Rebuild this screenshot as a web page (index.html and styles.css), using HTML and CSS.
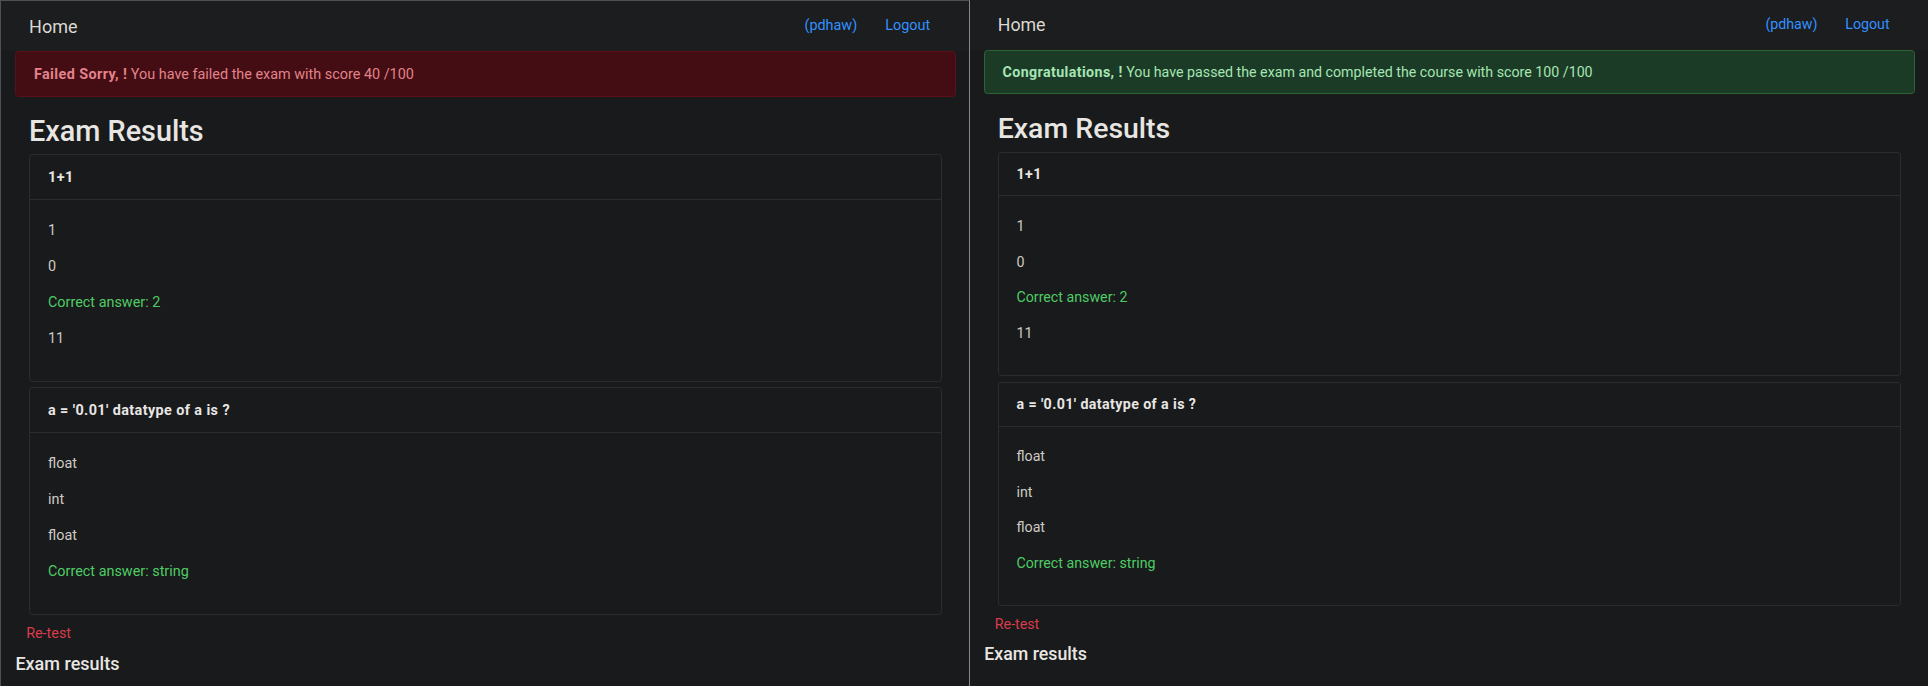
FILE: index.html
```html
<!DOCTYPE html>
<html lang="en">
<head>
<meta charset="utf-8">
<title>Exam Results</title>
<link rel="stylesheet" href="styles.css">
</head>
<body>
<div class="shots">
  <section class="shot shot--fail">
    <nav class="navbar">
      <a class="brand" href="#">Home</a>
      <div class="nav-links">
        <a class="nav-link" href="#">(pdhaw)</a>
        <a class="nav-link" href="#">Logout</a>
      </div>
    </nav>
    <div class="alert alert--danger"><strong>Failed Sorry, !</strong> You have failed the exam with score 40 /100</div>
    <main class="content">
      <h2 class="title">Exam Results</h2>
      <div class="card">
        <div class="card-header">1+1</div>
        <div class="card-body">
          <p>1</p>
          <p>0</p>
          <p class="correct">Correct answer: 2</p>
          <p>11</p>
        </div>
      </div>
      <div class="card">
        <div class="card-header">a = '0.01' datatype of a is ?</div>
        <div class="card-body">
          <p>float</p>
          <p>int</p>
          <p>float</p>
          <p class="correct">Correct answer: string</p>
        </div>
      </div>
      <a class="retest" href="#">Re-test</a>
    </main>
    <h5 class="sub-title">Exam results</h5>
  </section>

  <section class="shot shot--pass">
    <nav class="navbar">
      <a class="brand" href="#">Home</a>
      <div class="nav-links">
        <a class="nav-link" href="#">(pdhaw)</a>
        <a class="nav-link" href="#">Logout</a>
      </div>
    </nav>
    <div class="alert alert--success"><strong>Congratulations, !</strong> You have passed the exam and completed the course with score 100 /100</div>
    <main class="content">
      <h2 class="title">Exam Results</h2>
      <div class="card">
        <div class="card-header">1+1</div>
        <div class="card-body">
          <p>1</p>
          <p>0</p>
          <p class="correct">Correct answer: 2</p>
          <p>11</p>
        </div>
      </div>
      <div class="card">
        <div class="card-header">a = '0.01' datatype of a is ?</div>
        <div class="card-body">
          <p>float</p>
          <p>int</p>
          <p>float</p>
          <p class="correct">Correct answer: string</p>
        </div>
      </div>
      <a class="retest" href="#">Re-test</a>
    </main>
    <h5 class="sub-title">Exam results</h5>
  </section>
</div>
</body>
</html>
```

FILE: styles.css
```css
* { box-sizing: border-box; }

html, body {
  margin: 0;
  padding: 0;
  background: #181a1b;
}

body {
  font-family: "Segoe UI", Roboto, "Noto Sans", "Liberation Sans", sans-serif;
  color: #cfcac4;
  width: 1928px;
  height: 686px;
  overflow: hidden;
}

.shots {
  display: flex;
  align-items: flex-start;
  height: 686px;
}

.shot {
  font-size: 14.4px;
  line-height: 1.5;
  height: 686px;
  background: #181a1b;
}

.shot--fail {
  width: 970px;
  flex: none;
  border-top: 1px solid #4e5154;
  border-left: 1px solid #4e5154;
  border-right: 1px solid #85878a;
}

.shot--pass {
  flex: 1;
  font-size: 14.23px;
}

a { text-decoration: none; }

/* navbar */
.navbar {
  display: flex;
  align-items: center;
  justify-content: space-between;
  padding: 0.5em 2.7em 0.5em 1.95em;
  background: #1b1d1f;
}

.brand {
  font-size: 1.25em;
  line-height: 1.5;
  padding: 0.25em 0;
  color: #dcd8d2;
}

.nav-links {
  display: flex;
  gap: 1.95em;
}

.nav-link {
  color: #3391ff;
}

/* alert */
.alert {
  margin: 0 0.9em 1em 0.97em;
  padding: calc(0.75em + 1px) 1.25em calc(0.75em - 1px);
  border: 1px solid transparent;
  border-radius: 0.25em;
}

.alert--danger {
  background: #430d13;
  border-color: #5c1019;
  color: #e3828b;
}

.alert--success {
  background: #1c3b26;
  border-color: #2c6437;
  color: #a4e6b3;
}

.alert strong {
  font-weight: 700;
  letter-spacing: 0.028em;
}

/* content */
.content {
  margin: 0 1.875em 0 1.945em;
}

.title {
  font-size: 2em;
  font-weight: 500;
  line-height: 1.2;
  margin: 0 0 0.2em;
  padding-top: 0.11em;
  color: #e8e6e3;
}

.card {
  border: 1px solid #2b2e30;
  border-radius: 0.25em;
  margin-bottom: 0.4em;
  background: #181a1b;
}

.card-header {
  padding: calc(0.75em + 1px) 1.25em calc(0.75em - 1px);
  border-bottom: 1px solid #2b2e30;
  font-weight: 700;
  letter-spacing: 0.028em;
  color: #e8e6e3;
}

.card-body {
  padding: calc(1.25em + 2px) 1.25em calc(1.25em - 1px);
}

.card-body p {
  margin: 0 0 1em;
}

.correct {
  color: #4fcb65;
}

.retest {
  display: block;
  margin: calc(0.5em + 1px) 0 0 -0.2em;
  color: #d93c4c;
}

.sub-title {
  font-size: 1.25em;
  font-weight: 500;
  line-height: 1.2;
  margin: calc(0.42em + 1px) 0 0 0.8em;
  color: #e8e6e3;
}
```
